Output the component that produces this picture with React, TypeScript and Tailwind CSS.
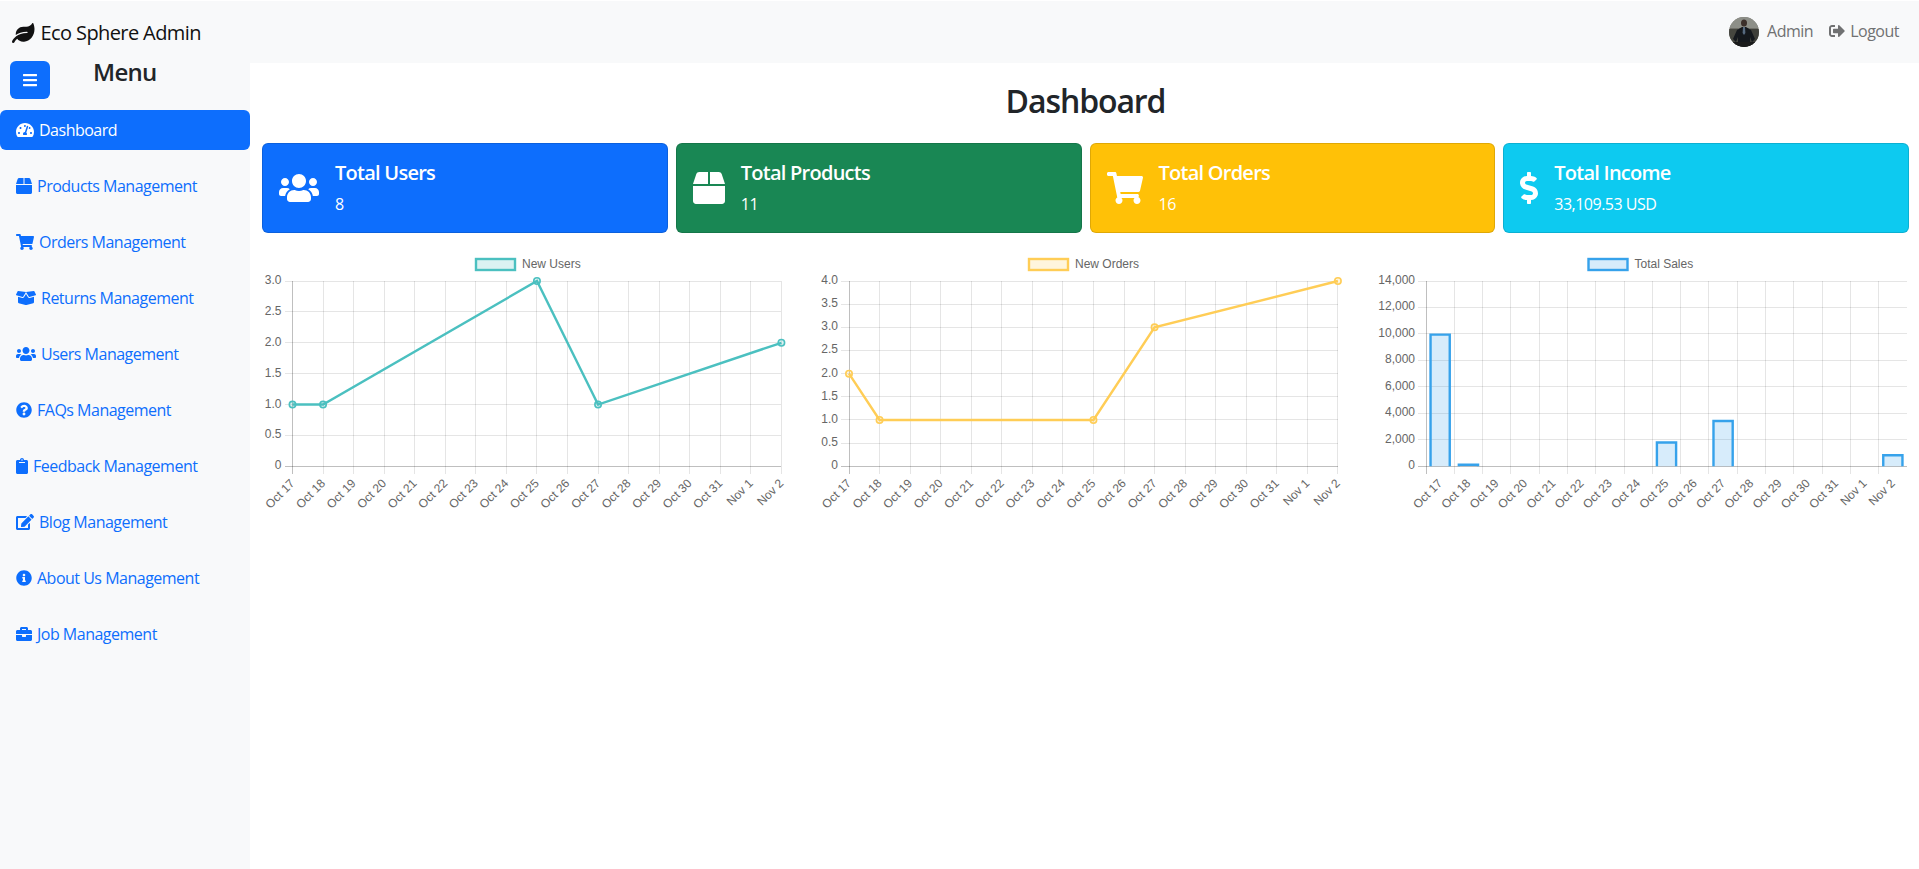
import React from "react";
import {
  FaLeaf, FaBars, FaTachometerAlt, FaBox, FaShoppingCart, FaBoxOpen, FaUsers,
  FaQuestionCircle, FaClipboard, FaEdit, FaInfoCircle, FaBriefcase, FaSignOutAlt, FaDollarSign,
} from "react-icons/fa";

const labels = ["Oct 17","Oct 18","Oct 19","Oct 20","Oct 21","Oct 22","Oct 23","Oct 24","Oct 25","Oct 26","Oct 27","Oct 28","Oct 29","Oct 30","Oct 31","Nov 1","Nov 2"];

const navItems = [
  { icon: FaTachometerAlt, w: "w-[18px]", label: "Dashboard", active: true },
  { icon: FaBox, w: "w-4", label: "Products Management" },
  { icon: FaShoppingCart, w: "w-[18px]", label: "Orders Management" },
  { icon: FaBoxOpen, w: "w-5", label: "Returns Management" },
  { icon: FaUsers, w: "w-5", label: "Users Management" },
  { icon: FaQuestionCircle, w: "w-4", label: "FAQs Management" },
  { icon: FaClipboard, w: "w-3", label: "Feedback Management" },
  { icon: FaEdit, w: "w-[18px]", label: "Blog Management" },
  { icon: FaInfoCircle, w: "w-4", label: "About Us Management" },
  { icon: FaBriefcase, w: "w-4", label: "Job Management" },
];

const stats = [
  { icon: FaUsers, w: "w-10", title: "Total Users", value: "8", bg: "bg-[#0d6efd]" },
  { icon: FaBox, w: "w-8", title: "Total Products", value: "11", bg: "bg-[#198754]" },
  { icon: FaShoppingCart, w: "w-9", title: "Total Orders", value: "16", bg: "bg-[#ffc107]" },
  { icon: FaDollarSign, w: "w-[18px]", title: "Total Income", value: "33,109.53 USD", bg: "bg-[#0dcaf0]" },
];

const TOP = 32;
const BOTTOM = 217.3;

type ChartProps = {
  kind: "line" | "bar";
  legend: string;
  stroke: string;
  fill: string;
  left: number;
  right: number;
  max: number;
  step: number;
  legendLeft: number;
  points: [number, number][];
  format: (v: number) => string;
};

function Chart({ kind, legend, stroke, fill, left, right, max, step, legendLeft, points, format }: ChartProps) {
  const cells = kind === "bar" ? 17 : 16;
  const cell = (right - left) / cells;
  const yOf = (v: number) => BOTTOM - (v / max) * (BOTTOM - TOP);
  const xOf = (i: number) => left + cell * i + (kind === "bar" ? cell / 2 : 0);
  const ticks: number[] = [];
  for (let v = 0; v <= max + 1e-6; v += step) ticks.push(v);
  const lines = Array.from({ length: cells + 1 }, (_, i) => left + cell * i);
  return (
    <svg width="100%" height="266" className="font-['Liberation_Sans',Arial,sans-serif] tracking-normal">
      <rect x={legendLeft + 1} y={10} width={39} height={11} fill={fill} stroke={stroke} strokeWidth={2.4} />
      <text x={legendLeft + 47} y={19} fontSize={12} fill="#666">{legend}</text>

      {ticks.map((v) => (
        <g key={v}>
          <line x1={left - 8} x2={right} y1={yOf(v)} y2={yOf(v)} shapeRendering="crispEdges" stroke={v === 0 ? "rgba(0,0,0,0.25)" : "rgba(0,0,0,0.1)"} />
          <text x={left - 11} y={yOf(v) + 3} fontSize={12} fill="#666" textAnchor="end">{format(v)}</text>
        </g>
      ))}
      {lines.map((x, i) => (
        <line key={i} x1={x} x2={x} y1={TOP} y2={BOTTOM + 8} shapeRendering="crispEdges" stroke={i === 0 ? "rgba(0,0,0,0.25)" : "rgba(0,0,0,0.1)"} />
      ))}
      {labels.map((l, i) => (
        <text key={l} transform={`translate(${xOf(i)} ${BOTTOM + 15}) rotate(-45)`} fontSize={12} fill="#666" textAnchor="end" dominantBaseline="central">{l}</text>
      ))}

      {kind === "line" && (
        <>
          <polyline points={points.map(([i, v]) => `${xOf(i)},${yOf(v)}`).join(" ")} fill="none" stroke={stroke} strokeWidth={2.4} />
          {points.map(([i, v]) => (
            <circle key={i} cx={xOf(i)} cy={yOf(v)} r={3.2} fill={fill} stroke={stroke} strokeWidth={1.6} />
          ))}
        </>
      )}
      {kind === "bar" && points.map(([i, v]) => {
        const x0 = xOf(i) - 9.6;
        const x1 = xOf(i) + 9.6;
        const y = yOf(v);
        return (
          <g key={i}>
            <rect x={x0} y={y} width={x1 - x0} height={BOTTOM - y} fill={fill} />
            <path d={`M${x0} ${BOTTOM}V${y}H${x1}V${BOTTOM}`} fill="none" stroke={stroke} strokeWidth={2.4} />
          </g>
        );
      })}
    </svg>
  );
}

const oneDecimal = (v: number) => (v === 0 ? "0" : v.toFixed(1));
const withComma = (v: number) => v.toLocaleString("en-US");

function Avatar() {
  return (
    <svg width="30" height="30" viewBox="0 0 30 30" className="shrink-0 rounded-full">
      <rect width="30" height="30" fill="#6f6f68" />
      <rect width="30" height="11" fill="#8d8f88" />
      <rect x="0" y="12" width="9" height="18" fill="#45463f" />
      <rect x="21" y="12" width="9" height="18" fill="#3e3f39" />
      <ellipse cx="15" cy="6" rx="3" ry="3.6" fill="#3b2f2a" />
      <path d="M8 13l5-3h4l5 3 4 9-3 3-2-5v10H9V20l-2 5-3-3z" fill="#14181d" />
      <path d="M14 10h2l.4 6-1.4 2-1.4-2z" fill="#566a80" />
      <rect x="0" y="25" width="30" height="5" fill="#1a1b1b" />
    </svg>
  );
}

export default function App() {
  return (
    <div className="flex min-h-screen flex-col bg-white pt-px text-[16px] font-['Open_Sans',sans-serif] tracking-[-0.5px] text-[#212529]">
      <header className="flex h-[62px] items-center justify-between bg-[#f8f9fa] pl-3 pr-5">
        <div className="mt-[2px] flex items-center gap-[6px] text-[20px] tracking-[-0.6px] text-[#111]">
          <FaLeaf className="h-5 w-[22.5px] shrink-0 text-[#111]" />
          <span>Eco Sphere Admin</span>
        </div>
        <div className="flex items-center text-[#707172]">
          <Avatar />
          <span className="ml-2 -mt-[2px]">Admin</span>
          <FaSignOutAlt className="ml-4 -mt-[2px] h-4 w-4 shrink-0" />
          <span className="ml-[5px] -mt-[2px]">Logout</span>
        </div>
      </header>
      <div className="flex flex-1">
        <aside className="w-[250px] shrink-0 bg-[#f8f9fa]">
          <div className="-mt-[2px] flex items-start pl-[10px]">
            <button className="flex h-[38px] w-10 items-center justify-center rounded-md bg-[#0d6efd] text-white">
              <FaBars className="h-4 w-[14px]" />
            </button>
            <h4 className="ml-[43px] -mt-px text-[24px] font-semibold leading-[24px] tracking-[-0.7px] text-[#212529]">Menu</h4>
          </div>
          <nav className="mt-[11px] flex flex-col gap-4">
            {navItems.map(({ icon: Icon, w, label, active }) => (
              <a
                key={label}
                href="#"
                className={`flex h-10 items-center gap-[5px] rounded-md px-4 ${active ? "bg-[#0d6efd] text-white" : "text-[#0d6efd]"}`}
              >
                <Icon className={`h-4 shrink-0 ${w}`} />
                <span>{label}</span>
              </a>
            ))}
          </nav>
        </aside>
        <main className="min-w-0 flex-1">
          <h2 className="mt-[18px] mb-[23px] pl-[2px] text-center text-[32px] font-semibold leading-[39px] tracking-[-1.1px] text-[#212529]">Dashboard</h2>
          <div className="ml-3 mr-[10px] grid grid-cols-4 gap-2">
            {stats.map(({ icon: Icon, w, title, value, bg }) => (
              <div key={title} className={`flex h-[90px] items-center gap-4 rounded-md border border-black/[0.125] px-4 text-white ${bg}`}>
                <Icon className={`h-8 shrink-0 ${w}`} />
                <div>
                  <div className="mt-px text-[20px] font-semibold leading-6 tracking-[-0.75px]">{title}</div>
                  <div className="mt-[7px] leading-6">{value}</div>
                </div>
              </div>
            ))}
          </div>
          <div className="mt-4 grid grid-cols-3">
            <div className="px-3">
              <Chart kind="line" legend="New Users" stroke="#4bc0c0" fill="rgba(75,192,192,0.2)" left={30.5} right={519.4} max={3} step={0.5} legendLeft={213} points={[[0,1],[1,1],[8,3],[10,1],[16,2]]} format={oneDecimal} />
            </div>
            <div className="px-3">
              <Chart kind="line" legend="New Orders" stroke="#ffcd56" fill="rgba(255,205,86,0.2)" left={31} right={519.9} max={4} step={0.5} legendLeft={210} points={[[0,2],[1,1],[8,1],[10,3],[16,4]]} format={oneDecimal} />
            </div>
            <div className="px-3">
              <Chart kind="bar" legend="Total Sales" stroke="#36a2eb" fill="rgba(54,162,235,0.2)" left={51} right={532} max={14000} step={2000} legendLeft={212.5} points={[[0,9950],[1,120],[8,1800],[10,3420],[16,840]]} format={withComma} />
            </div>
          </div>
        </main>
      </div>
    </div>
  );
}
